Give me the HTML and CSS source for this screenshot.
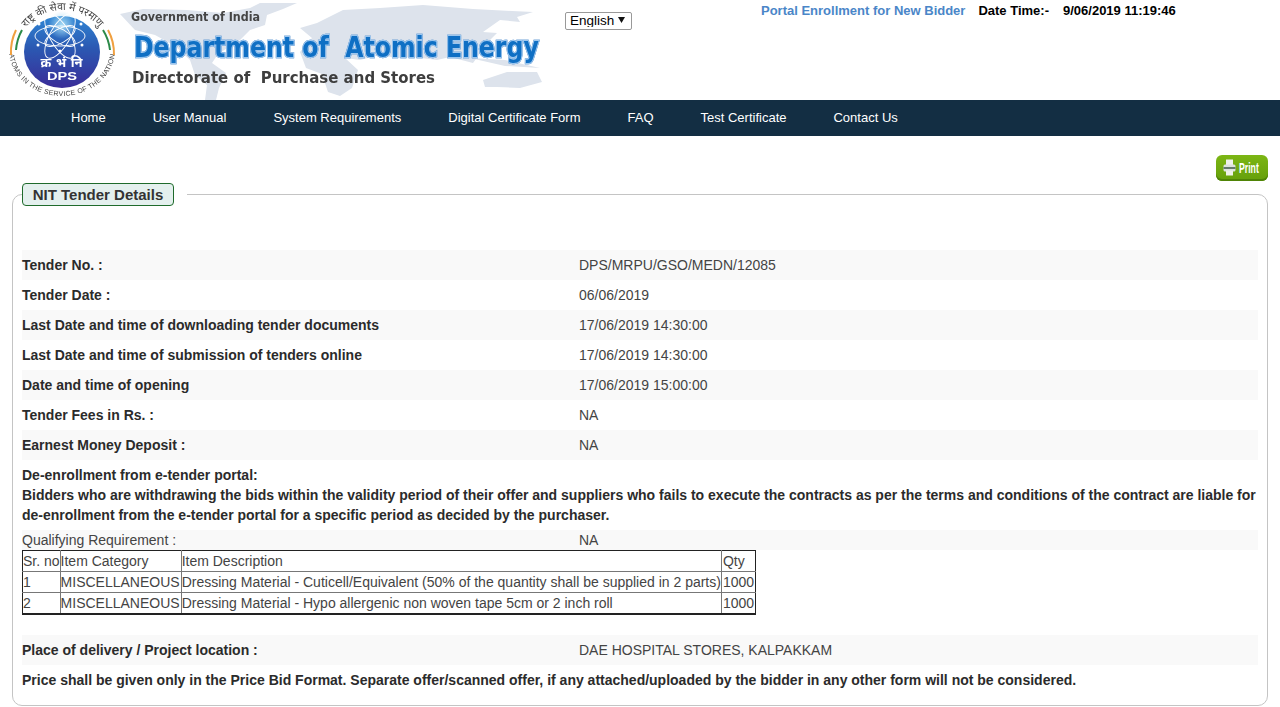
FILE: index.html
```html
<!DOCTYPE html>
<html lang="en">
<head>
<meta charset="utf-8">
<title>NIT Tender Details</title>
<link rel="stylesheet" href="styles.css">
</head>
<body>
<header class="topbar">
  <svg class="banner" width="560" height="100" viewBox="0 0 560 100" aria-label="Department of Atomic Energy">
    <defs>
      <linearGradient id="disc" x1="0" y1="0" x2="0" y2="1">
        <stop offset="0" stop-color="#2f86d4"/>
        <stop offset="0.45" stop-color="#2b58b2"/>
        <stop offset="1" stop-color="#3a2c98"/>
      </linearGradient>
      <radialGradient id="glow">
        <stop offset="0" stop-color="#a8dcf5"/>
        <stop offset="1" stop-color="#a8dcf5" stop-opacity="0"/>
      </radialGradient>
      <path id="arcTop" d="M19 44 A44 40 0 0 1 106 44"/>
      <path id="arcBottom" d="M9 50 A53 46 0 0 0 115 50"/>
    </defs>
    <g class="map">
      <path d="M120 14 L143 9 L187 10 L223 13 L250 8 L260 3 L297 3 L283 9 L267 15 L265 25 L250 30 L240 40 L218 54 L212 63 L226 73 L219 88 L216 100 L205 100 L207 85 L195 75 L190 60 L175 46 L155 35 L135 30 Z"/>
      <path d="M300 28 L317 23 L343 10 L380 8 L423 5 L473 9 L533 12 L517 17 L520 22 L500 20 L483 32 L497 33 L490 40 L473 63 L450 57 L437 60 L413 57 L397 58 L380 55 L360 60 L345 58 L358 70 L352 88 L340 96 L328 92 L322 74 L306 68 L300 52 L312 38 Z"/>
      <path d="M483 80 L507 72 L537 72 L542 82 L520 88 L497 87 L485 87 Z"/>
      <path d="M470 58 L505 60 L540 68 L505 66 Z"/>
    </g>
    <ellipse cx="62" cy="52" rx="38" ry="36" fill="url(#disc)"/>
    <circle cx="62" cy="25" r="14" fill="url(#glow)"/>
    <g class="atom">
      <ellipse cx="60" cy="36" rx="25" ry="10"/>
      <ellipse cx="60" cy="36" rx="25" ry="10" transform="rotate(60 60 36)"/>
      <ellipse cx="60" cy="36" rx="25" ry="10" transform="rotate(120 60 36)"/>
      <ellipse cx="60" cy="36" rx="17" ry="7" transform="rotate(30 60 36)"/>
      <ellipse cx="60" cy="36" rx="17" ry="7" transform="rotate(150 60 36)"/>
    </g>
    <g class="dots">
      <circle cx="39" cy="24" r="1.5"/><circle cx="81" cy="24" r="1.5"/>
      <circle cx="38" cy="45" r="1.5"/><circle cx="82" cy="45" r="1.5"/>
      <circle cx="60" cy="51" r="1.5"/>
    </g>
    <text class="logo-hi" x="61.5" y="67" text-anchor="middle" textLength="42">क्र भं नि</text>
    <text class="logo-dps" x="62" y="80" text-anchor="middle" textLength="30" lengthAdjust="spacingAndGlyphs">DPS</text>
    <text class="logo-arc-top"><textPath href="#arcTop" startOffset="50%" text-anchor="middle">राष्ट्र की सेवा में परमाणु</textPath></text>
    <text class="logo-arc-bottom"><textPath href="#arcBottom" startOffset="50%" text-anchor="middle">ATOMS IN THE SERVICE OF THE NATION</textPath></text>
    <path class="flag-o" d="M11 55 A50 50 0 0 1 16 30"/>
    <path class="flag-g" d="M16 50 A48 48 0 0 1 22 30"/>
    <path class="flag-o" d="M114 55 A50 50 0 0 0 108 30"/>
    <path class="flag-g" d="M110 50 A48 48 0 0 0 103 30"/>
    <text class="goi" x="131" y="21" textLength="129" lengthAdjust="spacingAndGlyphs">Government of India</text>
    <text class="dept" transform="translate(134 57) scale(0.8 1)" textLength="506" lengthAdjust="spacingAndGlyphs">Department of  Atomic Energy</text>
    <text class="dps" x="132" y="83" textLength="303" lengthAdjust="spacingAndGlyphs">Directorate of  Purchase and Stores</text>
  </svg>
  <select class="lang"><option>English</option></select>
  <div class="status">
    <a class="enroll" href="#">Portal Enrollment for New Bidder</a>
    <span class="dt-label">Date Time:-</span>
    <span class="dt-value">9/06/2019 11:19:46</span>
  </div>
</header>
<nav class="mainnav">
  <a href="#">Home</a>
  <a href="#">User Manual</a>
  <a href="#">System Requirements</a>
  <a href="#">Digital Certificate Form</a>
  <a href="#">FAQ</a>
  <a href="#">Test Certificate</a>
  <a href="#">Contact Us</a>
</nav>
<main class="content">
  <div class="toolbar">
    <button class="print" type="button">
      <svg width="38" height="18" viewBox="0 0 38 18">
        <rect x="3" y="0.5" width="7" height="6" fill="#eef1ea"/>
        <rect x="0.5" y="5.5" width="12" height="7" rx="1.5" fill="#dde2de"/>
        <rect x="0.5" y="8" width="12" height="2" fill="#647a6c"/>
        <rect x="3" y="11.5" width="7" height="5" fill="#eef1ea"/>
        <text class="print-label" transform="translate(16 14) scale(0.6 1)" textLength="33" lengthAdjust="spacingAndGlyphs">Print</text>
      </svg>
    </button>
  </div>
  <fieldset class="panel">
    <legend class="panel-legend"><span>NIT Tender Details</span></legend>
    <div class="row alt"><div class="label">Tender No. :</div><div class="value">DPS/MRPU/GSO/MEDN/12085</div></div>
    <div class="row"><div class="label">Tender Date :</div><div class="value">06/06/2019</div></div>
    <div class="row alt"><div class="label">Last Date and time of downloading tender documents</div><div class="value">17/06/2019 14:30:00</div></div>
    <div class="row"><div class="label">Last Date and time of submission of tenders online</div><div class="value">17/06/2019 14:30:00</div></div>
    <div class="row alt"><div class="label">Date and time of opening</div><div class="value">17/06/2019 15:00:00</div></div>
    <div class="row"><div class="label">Tender Fees in Rs. :</div><div class="value">NA</div></div>
    <div class="row alt"><div class="label">Earnest Money Deposit :</div><div class="value">NA</div></div>
    <p class="notice">De-enrollment from e-tender portal:<br>Bidders who are withdrawing the bids within the validity period of their offer and suppliers who fails to execute the contracts as per the terms and conditions of the contract are liable for de-enrollment from the e-tender portal for a specific period as decided by the purchaser.</p>
    <div class="row short alt"><div class="label plain">Qualifying Requirement :</div><div class="value">NA</div></div>
    <table class="items">
      <tr><td>Sr. no</td><td>Item Category</td><td>Item Description</td><td>Qty</td></tr>
      <tr><td>1</td><td>MISCELLANEOUS</td><td>Dressing Material - Cuticell/Equivalent (50% of the quantity shall be supplied in 2 parts)</td><td>1000</td></tr>
      <tr><td>2</td><td>MISCELLANEOUS</td><td>Dressing Material - Hypo allergenic non woven tape 5cm or 2 inch roll</td><td>1000</td></tr>
    </table>
    <div class="row alt place"><div class="label">Place of delivery / Project location :</div><div class="value">DAE HOSPITAL STORES, KALPAKKAM</div></div>
    <div class="row"><div class="label wide">Price shall be given only in the Price Bid Format. Separate offer/scanned offer, if any attached/uploaded by the bidder in any other form will not be considered.</div></div>
  </fieldset>
</main>
</body>
</html>
```
FILE: styles.css
```css
* { box-sizing: border-box; }
html, body { margin: 0; padding: 0; }
body {
  font-family: "Liberation Sans", Arial, sans-serif;
  font-size: 14px;
  color: #333;
  background: #fff;
}
.topbar {
  display: flex;
  align-items: flex-start;
  height: 100px;
}
.banner { display: block; flex: none; filter: blur(0.3px); }
.map path { fill: #dde3ec; }
.atom ellipse { fill: none; stroke: #fff; stroke-width: 0.9; }
.dots circle { fill: #fff; }
.logo-hi { font: bold 13px "Noto Sans", "Liberation Sans", sans-serif; fill: #fff; }
.logo-dps { font: bold 11px "Liberation Sans", sans-serif; fill: #fff; }
.logo-arc-top { font: 10.5px "Noto Sans", "Liberation Sans", sans-serif; fill: #444; }
.logo-arc-bottom { font: 7px "Liberation Sans", sans-serif; letter-spacing: 0.3px; fill: #444; }
.flag-o { fill: none; stroke: #f0a040; stroke-width: 2; }
.flag-g { fill: none; stroke: #2c8a48; stroke-width: 2; }
.goi { font: bold 12px "DejaVu Sans", sans-serif; fill: #444; }
.dept {
  font: bold 29px "DejaVu Sans", sans-serif;
  fill: #0f6fc4;
  stroke: #9cc6ee;
  stroke-width: 2.4;
  paint-order: stroke;
  white-space: pre;
  filter: drop-shadow(0 0 0.6px #2f70b8);
}
.dps { font: bold 16.5px "DejaVu Sans", sans-serif; fill: #3e3e3e; white-space: pre; }
.lang {
  flex: none;
  appearance: none;
  margin: 12px 0 0 5px;
  width: 67px;
  height: 18px;
  font: 13.5px/16px "Liberation Sans", Arial, sans-serif;
  color: #000;
  background: #fff url("data:image/svg+xml,%3Csvg xmlns='http://www.w3.org/2000/svg' width='7' height='6'%3E%3Cpath d='M0 0h7L3.5 6z' fill='%23111'/%3E%3C/svg%3E") no-repeat 52px 4px;
  border: 1px solid #999;
  border-radius: 2px;
  padding: 0 0 2px 4px;
}
.status {
  display: flex;
  margin: 3px 0 0 129px;
  font-weight: bold;
  font-size: 13px;
  line-height: 16px;
  color: #000;
}
.enroll { color: #4a86c8; text-decoration: none; }
.dt-label { margin-left: 13px; }
.dt-value { margin-left: 14px; }
.mainnav {
  display: flex;
  gap: 47px;
  height: 36px;
  padding: 0 0 2px 71px;
  align-items: center;
  background: #132e43;
}
.mainnav a { color: #fff; text-decoration: none; font-size: 13px; }
.content { padding: 19px 12px 0; }
.toolbar { display: flex; justify-content: flex-end; height: 26px; }
.print {
  display: flex;
  align-items: center;
  width: 52px;
  height: 26px;
  padding: 0 0 0 7px;
  border: 0;
  border-radius: 6px;
  background: linear-gradient(#7cb614, #659f0b);
  box-shadow: inset 0 -2px 0 #4f8406;
}
.print-label { font: bold 14px "Liberation Sans", Arial, sans-serif; fill: #fff; }
.panel {
  margin: 2px 0 0;
  padding: 0 9px 10px;
  border: 1px solid #c4c4c4;
  border-radius: 10px;
  min-width: 0;
}
.panel-legend { padding: 0 13px 0 0; margin-bottom: 44px; }
.panel-legend span {
  display: block;
  height: 23px;
  width: 152px;
  text-align: center;
  line-height: 21px;
  font-size: 15px;
  font-weight: bold;
  background: #e4f0ee;
  border: 1px solid #1f6b2c;
  border-radius: 4px;
}
.row { display: flex; height: 30px; align-items: center; }
.row.alt { background: #f9f9f9; }
.row.short { height: 20px; }
.row.place { margin-top: 20px; }
.label { width: 557px; flex: none; font-weight: bold; color: #2b2b2b; }
.label.plain { font-weight: normal; color: #444; }
.label.wide { width: auto; }
.value { color: #444; }
.notice {
  margin: 5px 0;
  font-weight: bold;
  line-height: 20px;
  color: #2b2b2b;
}
.items {
  border-collapse: collapse;
  color: #444;
}
.items td {
  border: 1px solid #777;
  padding: 0;
  height: 21px;
  line-height: 18px;
}
.items td:nth-child(2) { padding-right: 1px; }
.items td:nth-child(4) { padding: 0 1px; }
.items tr:first-child td { border-top-color: #222; }
.items tr:last-child td { border-bottom: 2px solid #222; }
.items td:first-child { border-left-color: #222; }
.items td:last-child { border-right-color: #222; }
```
